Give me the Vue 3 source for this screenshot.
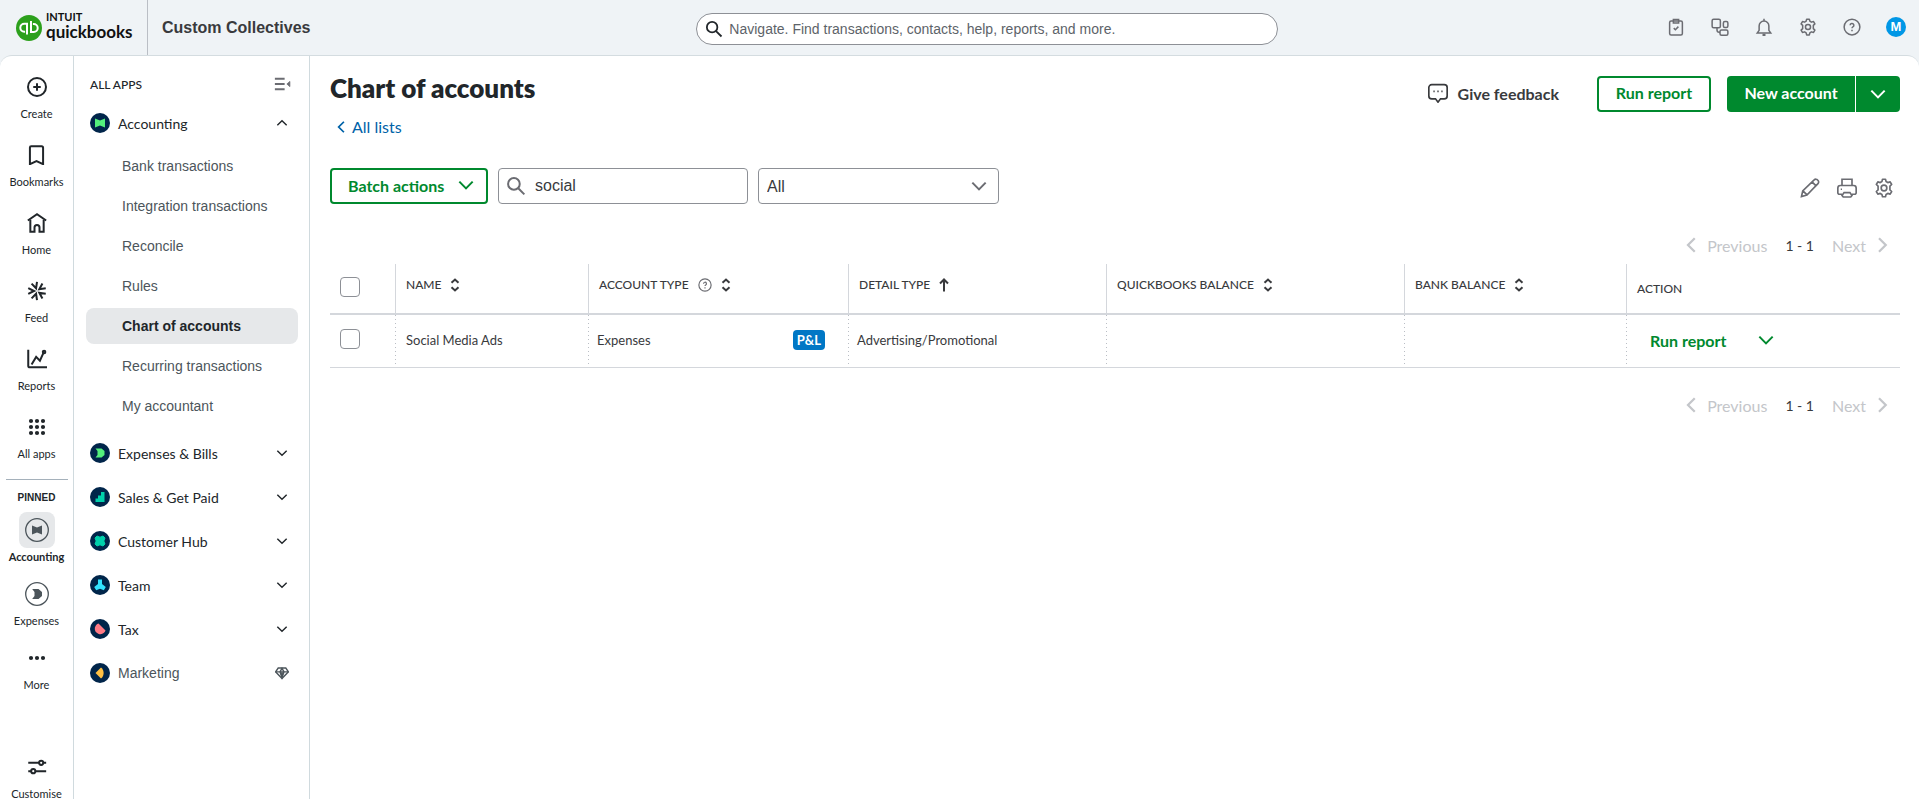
<template>
  <div class="app">
    <header class="topbar">
      <a href="#" class="brand" aria-label="Intuit QuickBooks">
        <svg class="brand-mark" viewBox="0 0 26 26" aria-hidden="true">
          <circle cx="13" cy="13" r="13" fill="#2ca01c" />
          <g fill="none" stroke="#fff" stroke-width="2">
            <path d="M11 19.5V8.7H8.3a4 4 0 0 0 0 8h.8" />
            <path d="M15 6v11h2.7a4 4 0 0 0 0-8h-.8" />
          </g>
        </svg>
        <span class="brand-name">
          <span class="brand-intuit">INTUIT</span>
          <span class="brand-product">quickbooks</span>
        </span>
      </a>
      <strong class="company">Custom Collectives</strong>
      <label class="global-search">
        <svg class="icon" viewBox="0 0 24 24" v-html="icons.search"></svg>
        <input
          type="text"
          aria-label="Search"
          placeholder="Navigate. Find transactions, contacts, help, reports, and more."
        />
      </label>
      <div class="top-actions">
        <button v-for="name in topIcons" :key="name" type="button" :aria-label="name">
          <svg class="icon" viewBox="0 0 24 24" v-html="icons[name]"></svg>
        </button>
        <button type="button" class="avatar">M</button>
      </div>
    </header>

    <div class="shell">
      <nav class="rail" aria-label="Main">
        <a v-for="item in railItems" :key="item.label" href="#" class="rail-item">
          <span class="rail-icon">
            <svg class="icon" viewBox="0 0 24 24" v-html="icons[item.icon]"></svg>
          </span>
          {{ item.label }}
        </a>
        <hr class="rail-line" />
        <div class="rail-heading">PINNED</div>
        <a
          v-for="item in pinnedItems"
          :key="item.label"
          href="#"
          class="rail-item pinned"
          :class="{ active: item.active, round: item.round, last: item.icon === 'sliders' }"
        >
          <span class="rail-icon">
            <svg class="icon" viewBox="0 0 24 24" v-html="icons[item.icon]"></svg>
          </span>
          {{ item.label }}
        </a>
      </nav>

      <aside class="side">
        <div class="side-head">
          <span>ALL APPS</span>
          <button type="button" aria-label="Collapse menu">
            <svg class="icon" viewBox="0 0 24 24" v-html="icons.collapse"></svg>
          </button>
        </div>
        <button type="button" class="app-row first" aria-expanded="true">
          <svg class="app-badge" viewBox="0 0 20 20" v-html="badges.accounting"></svg>
          <span>Accounting</span>
          <svg class="icon" viewBox="0 0 24 24" v-html="icons.up"></svg>
        </button>
        <a
          v-for="link in accountingLinks"
          :key="link"
          href="#"
          class="sub-link"
          :class="{ active: link === 'Chart of accounts' }"
          >{{ link }}</a
        >
        <div class="app-list">
          <button
            v-for="app in apps"
            :key="app.label"
            type="button"
            class="app-row"
            :class="{ locked: app.locked }"
          >
            <svg class="app-badge" viewBox="0 0 20 20" v-html="badges[app.badge]"></svg>
            <span>{{ app.label }}</span>
            <svg
              class="icon"
              viewBox="0 0 24 24"
              v-html="app.locked ? icons.diamond : icons.down"
            ></svg>
          </button>
        </div>
      </aside>

      <main class="content">
        <div class="page-head">
          <div>
            <h1>Chart of accounts</h1>
            <a href="#" class="back-link">
              <svg class="icon" viewBox="0 0 24 24" v-html="icons.left"></svg>All lists
            </a>
          </div>
          <div class="page-actions">
            <button type="button" class="feedback">
              <svg class="icon" viewBox="0 0 24 24" v-html="icons.feedback"></svg>Give feedback
            </button>
            <button type="button" class="btn-outline">Run report</button>
            <div class="btn-split">
              <button type="button">New account</button>
              <button type="button" class="split-arrow" aria-label="More options">
                <svg class="icon" viewBox="0 0 24 24" v-html="icons.down"></svg>
              </button>
            </div>
          </div>
        </div>

        <div class="toolbar">
          <button type="button" class="btn-outline batch">
            Batch actions
            <svg class="icon" viewBox="0 0 24 24" v-html="icons.down"></svg>
          </button>
          <label class="filter-search">
            <svg class="icon" viewBox="0 0 24 24" v-html="icons.search"></svg>
            <input v-model="query" type="text" aria-label="Filter by name" />
          </label>
          <div class="filter-select">
            <select v-model="filter" aria-label="Account type">
              <option>All</option>
            </select>
            <svg class="icon" viewBox="0 0 24 24" v-html="icons.down"></svg>
          </div>
          <div class="table-tools">
            <button v-for="name in tableIcons" :key="name" type="button" :aria-label="name">
              <svg class="icon" viewBox="0 0 24 24" v-html="icons[name]"></svg>
            </button>
          </div>
        </div>

        <div class="pager">
          <button type="button" disabled>
            <svg class="icon" viewBox="0 0 24 24" v-html="icons.left"></svg>Previous
          </button>
          <span>1 - 1</span>
          <button type="button" disabled>
            Next<svg class="icon" viewBox="0 0 24 24" v-html="icons.right"></svg>
          </button>
        </div>

        <table class="accounts">
          <thead>
            <tr>
              <th class="col-check"><input type="checkbox" aria-label="Select all" /></th>
              <th v-for="col in columns" :key="col.label" :class="col.cls">
                <span class="th-label">
                  {{ col.label }}
                  <svg v-if="col.help" class="icon help" viewBox="0 0 24 24" v-html="icons.help"></svg>
                  <svg v-if="col.sort" class="sort" viewBox="0 0 10 14" v-html="icons[col.sort]"></svg>
                </span>
              </th>
            </tr>
          </thead>
          <tbody>
            <tr v-for="row in rows" :key="row.name">
              <td class="col-check"><input type="checkbox" :aria-label="row.name" /></td>
              <td class="col-name">{{ row.name }}</td>
              <td>
                <span class="type-cell">{{ row.type }} <b>{{ row.tag }}</b></span>
              </td>
              <td>{{ row.detail }}</td>
              <td></td>
              <td></td>
              <td>
                <span class="row-action">
                  <button type="button">Run report</button>
                  <button type="button" aria-label="More actions">
                    <svg class="icon" viewBox="0 0 24 24" v-html="icons.down"></svg>
                  </button>
                </span>
              </td>
            </tr>
          </tbody>
        </table>

        <div class="pager bottom">
          <button type="button" disabled>
            <svg class="icon" viewBox="0 0 24 24" v-html="icons.left"></svg>Previous
          </button>
          <span>1 - 1</span>
          <button type="button" disabled>
            Next<svg class="icon" viewBox="0 0 24 24" v-html="icons.right"></svg>
          </button>
        </div>
      </main>
    </div>
  </div>
</template>

<script setup>
import { ref } from 'vue'

const query = ref('social')
const filter = ref('All')

const gear =
  '<path d="M10.2 1.5h3.6l.7 2.8 2 1.2 2.9-.8 1.8 3.1-2.1 2v4.4l2.1 2-1.8 3.1-2.9-.8-2 1.2-.7 2.8h-3.6l-.7-2.8-2-1.2-2.9.8-1.8-3.1 2.1-2V9.800l-2.100-2 1.800-3.100 2.900.8 2-1.200z" stroke-linejoin="round"/><circle cx="12" cy="12" r="3.4"/>'

const icons = {
  search: '<circle cx="9.5" cy="9.5" r="7"/><path d="m14.7 14.7 7.3 7.3"/>',
  tasks:
    '<rect x="3.5" y="4" width="17" height="18.5" rx="2"/><path d="M8.5 2h7v4.5h-7zM9 13.5l2.2 2.2 4-4.2"/>',
  apps: '<rect x="1.5" y="1.5" width="11" height="11.5" rx="2"/><rect x="16.5" y="4.5" width="6" height="8" rx="2"/><rect x="12" y="16" width="10.5" height="7" rx="2"/><path d="M8 13v3a3 3 0 0 0 3 3h1"/>',
  bell: '<path d="M3 20h18l-2.500-3.500V10.500a6.500 6.500 0 0 0-13 0v6zM12 1v3"/><path d="M10 22.500h4" stroke-width="3"/>',
  settings: gear,
  help: '<circle cx="12" cy="12" r="10.5"/><path d="M9.500 9.700a2.500 2.500 0 1 1 3.700 2.200c-.8.5-1.200.9-1.200 1.800"/><path d="M12 15.800v2"/>',
  plus: '<circle cx="12" cy="12" r="10.8"/><path d="M12 7.500v9M7.500 12h9"/>',
  bookmark:
    '<path d="M5 1.500h12.500a1.800 1.800 0 0 1 1.800 1.800V23l-7.900-3.700L3.500 23V3A1.500 1.500 0 0 1 5 1.500z"/>',
  home: '<path d="m1 9 11-7.500L23 9"/><path d="M4 8v14.500h5v-5a3 3 0 0 1 6 0v5h5V8"/>',
  feed: '<path d="M12 1 10.900 8.700 5.500 3.100M18.500 3.100l-3.700 6.800 7.700-1.300M22.500 15.400l-7.700-1.300 3.700 6.800M12 23l-1.100-7.700-5.400 5.600M1.500 15.400l7-3.400-7-3.400"/>',
  reports:
    '<path d="M1.500 1v19a2 2 0 0 0 2 2H24M5.500 18.500l5.500-9 4.500 4.500 4.500-10"/><circle cx="20.500" cy="3.500" r="1.500"/>',
  grid: [4.8, 12, 19.2]
    .map((y) => [4.8, 12, 19.2].map((x) => `<circle cx="${x}" cy="${y}" r="1.3"/>`).join(''))
    .join(''),
  accounting:
    '<circle cx="12" cy="12" r="11.3" stroke-width="1.3"/><path d="M7 7.500 12 9.500l5-2v9l-5-2-5 2z" fill="currentColor" stroke="none"/>',
  expenses:
    '<circle cx="12" cy="12" r="11.3" stroke-width="1.3"/><path d="M7.200 7h6.300l3.500 3v4l-3.500 3H7.200l2.300-3v-4z" fill="currentColor" stroke="none"/>',
  more: '<circle cx="4.8" cy="12" r="1.3"/><circle cx="12" cy="12" r="1.3"/><circle cx="19.2" cy="12" r="1.3"/>',
  sliders:
    '<path d="M1.500 7h13M19.500 7H23M1.500 17H5M10 17h13"/><circle cx="17" cy="7" r="2.5"/><circle cx="7.5" cy="17" r="2.5"/>',
  collapse:
    '<path d="M2.500 5h13M2.500 12h13M2.500 19h13"/><path d="M22.500 8.500v7L18.500 12z" fill="currentColor" stroke-width="1"/>',
  up: '<path d="m4 16 8-8 8 8"/>',
  down: '<path d="m4 8 8 8 8-8"/>',
  left: '<path d="m17 3-9 9 9 9"/>',
  right: '<path d="m8 3 9 9-9 9"/>',
  diamond:
    '<path d="M5.500 3.500h13L23 10 12 21.500 1 10z"/><path d="M1 10h22M8.500 10 12 4l3.500 6M12 10v10M8.500 10l3.500 10 3.500-10"/>',
  feedback:
    '<path d="M4.500 2h15A3.500 3.500 0 0 1 23 5.500v10a3.500 3.500 0 0 1-3.500 3.500H15l-3 4-3-4H4.500A3.500 3.500 0 0 1 1 15.500v-10A3.500 3.500 0 0 1 4.500 2z"/><path d="M6.500 10H8M11.200 10h1.600M16 10h1.500"/>',
  edit: '<path d="m1.800 22.200 1.500-6.700L17 2.300a2.800 2.800 0 0 1 4.200.2 2.800 2.800 0 0 1 .4 4.200L8.300 20.500zM14.500 4.700l4.700 4.700M3.500 15.500l5 4.800"/>',
  print:
    '<path d="M6 9V1.500h12V9M6 19.500H3A1.800 1.800 0 0 1 1 17.700V12a3 3 0 0 1 3-3h16a3 3 0 0 1 3 3v5.700a1.800 1.800 0 0 1-2 1.800h-3M4.500 13.500H6"/><path d="M8.500 17.500h7L18 21l-1.500 1.800h-9L6 21z"/>',
  both: '<path d="M1.500 4.800 5 1.500l3.500 3.300M1.500 9.200 5 12.500l3.500-3.300"/>',
  asc: '<path d="M5 13.500V2M1 5.500l4-4 4 4"/>',
}

const disc = '<circle cx="10" cy="10" r="10" fill="#00254a"/>'
const badges = {
  accounting: disc + '<path d="M5 5.500 10 7.500l5-2v9l-5-2-5 2z" fill="#53f07c"/>',
  expenses: disc + '<path d="M5.500 5.500h6L14.500 8v4l-3 2.500h-6l2-2.500V8z" fill="#53f07c"/>',
  sales: disc + '<path d="M14.500 5v10h-9v-3.500H8V8.500h3V5z" fill="#00d0ab"/>',
  hub:
    disc +
    '<path d="M7 5l3 1.200L13 5l2 2-1.200 3L15 13l-2 2-3-1.200L7 15l-2-2 1.200-3L5 7z" fill="#00d0ab" stroke="#00d0ab" stroke-linejoin="round"/>',
  team:
    disc +
    '<path d="M8 4.500h4V9l3.800 3-2 3.300-3.800-1.600-3.800 1.600-2-3.300L8 9z" fill="#33e3ff"/>',
  tax: disc + '<path d="m8.500 4.500 7 7A5.500 5.500 0 1 1 8.500 4.500z" fill="#ff7a85"/>',
  marketing: disc + '<path d="m5.500 10 5.500-5.500c3.500 2.500 3.500 8.500 0 11z" fill="#ffc043"/>',
}

const topIcons = ['tasks', 'apps', 'bell', 'settings', 'help']
const tableIcons = ['edit', 'print', 'settings']

const railItems = [
  { label: 'Create', icon: 'plus' },
  { label: 'Bookmarks', icon: 'bookmark' },
  { label: 'Home', icon: 'home' },
  { label: 'Feed', icon: 'feed' },
  { label: 'Reports', icon: 'reports' },
  { label: 'All apps', icon: 'grid' },
]

const pinnedItems = [
  { label: 'Accounting', icon: 'accounting', round: true, active: true },
  { label: 'Expenses', icon: 'expenses', round: true },
  { label: 'More', icon: 'more' },
  { label: 'Customise', icon: 'sliders' },
]

const accountingLinks = [
  'Bank transactions',
  'Integration transactions',
  'Reconcile',
  'Rules',
  'Chart of accounts',
  'Recurring transactions',
  'My accountant',
]

const apps = [
  { label: 'Expenses & Bills', badge: 'expenses' },
  { label: 'Sales & Get Paid', badge: 'sales' },
  { label: 'Customer Hub', badge: 'hub' },
  { label: 'Team', badge: 'team' },
  { label: 'Tax', badge: 'tax' },
  { label: 'Marketing', badge: 'marketing', locked: true },
]

const columns = [
  { label: 'NAME', sort: 'both', cls: 'col-name' },
  { label: 'ACCOUNT TYPE', sort: 'both', help: true, cls: 'col-type' },
  { label: 'DETAIL TYPE', sort: 'asc', cls: 'col-detail' },
  { label: 'QUICKBOOKS BALANCE', sort: 'both', cls: 'col-balance' },
  { label: 'BANK BALANCE', sort: 'both', cls: 'col-bank' },
  { label: 'ACTION', cls: 'col-action' },
]

const rows = [
  { name: 'Social Media Ads', type: 'Expenses', tag: 'P&L', detail: 'Advertising/Promotional' },
]
</script>

<style>
body {
  margin: 0;
  overflow: hidden;
}
</style>

<style scoped>
.app {
  display: flex;
  flex-direction: column;
  height: 100vh;
  background: #eff3f6;
  color: #21262a;
  font-family: Lato, sans-serif;
  font-size: 14px;
}

.app * {
  box-sizing: border-box;
}

a {
  color: inherit;
  text-decoration: none;
}

button {
  padding: 0;
  border: 0;
  background: none;
  color: inherit;
  font: inherit;
  cursor: pointer;
}

input,
select {
  font-family: 'Liberation Sans', sans-serif;
}

.icon,
.sort {
  flex: none;
  width: 20px;
  height: 20px;
  fill: none;
  stroke: currentColor;
  stroke-width: 2.4;
}

/* top bar */
.topbar {
  display: grid;
  grid-template-columns: 25fr 582px 23fr;
  grid-template-areas: 'left search right';
  align-items: center;
  height: 55px;
  flex: none;
}

.brand {
  grid-area: left;
  z-index: 1;
  display: flex;
  align-items: center;
  gap: 4px;
  width: 148px;
  height: 55px;
  padding-left: 16px;
  border-right: 1px solid #babec5;
  color: #111;
}

.brand-mark {
  width: 26px;
  height: 26px;
}

.brand-name {
  display: flex;
  flex-direction: column;
  padding-bottom: 3px;
  font-weight: 700;
}

.brand-intuit {
  font-size: 11px;
  line-height: 12px;
}

.brand-product {
  font-size: 17px;
  line-height: 18px;
}

.company {
  grid-area: left;
  padding-left: 162px;
  font: 700 16px/20px 'Liberation Sans', sans-serif;
  color: #393a3d;
  justify-self: start;
}

.global-search {
  grid-area: search;
  display: flex;
  align-items: center;
  gap: 6px;
  height: 32px;
  margin-top: 3px;
  padding: 0 16px 0 8px;
  border: 1px solid #8d9096;
  border-radius: 16px;
  background: #fff;
}

.global-search .icon {
  width: 18px;
  height: 18px;
}

.global-search input {
  flex: 1;
  padding: 0;
  border: 0;
  outline: 0;
  font-size: 14px;
}

.global-search input::placeholder {
  color: #5d6369;
}

.top-actions {
  grid-area: right;
  justify-self: end;
  display: flex;
  gap: 24px;
  padding: 0 13px 1px 0;
  color: #6b6c72;
}

.top-actions button {
  display: grid;
  place-items: center;
  width: 20px;
  height: 20px;
}

.top-actions .icon {
  width: 18px;
  height: 18px;
  stroke-width: 2;
}

.top-actions .avatar {
  border-radius: 50%;
  background: #0097e6;
  color: #fff;
  font: 700 13px/20px 'Liberation Sans', sans-serif;
}

.shell {
  display: flex;
  flex: 1;
  min-height: 0;
  overflow: hidden;
  border-top: 1px solid #d4dce0;
  border-radius: 12px 12px 0 0;
  background: #fff;
}

/* icon rail */
.rail {
  flex: none;
  width: 74px;
  padding-top: 13px;
  border-right: 1px solid #d0dade;
  overflow: hidden;
}

.rail-item {
  display: flex;
  flex-direction: column;
  align-items: center;
  gap: 1px;
  margin-bottom: 15px;
  font-size: 11px;
  line-height: 16px;
}

.rail-icon {
  display: grid;
  place-items: center;
  width: 36px;
  height: 36px;
  border-radius: 8px;
}

.rail-line {
  height: 1px;
  margin: 17px 5px 10px 6px;
  border: 0;
  background: #a5b1bb;
}

.rail-heading {
  margin-bottom: 6px;
  text-align: center;
  font: 700 10px/16px 'Liberation Sans', sans-serif;
}

.rail-item.pinned {
  margin-bottom: 11px;
}

.rail-item.active {
  font-weight: 700;
}

.rail-item.active .rail-icon {
  background: #e6e8ea;
}

.rail-item.round .icon {
  width: 24px;
  height: 24px;
  color: #4c555b;
}

.rail-item.last {
  margin-top: 56px;
}

/* app menu */
.side {
  flex: none;
  width: 236px;
  padding: 16px 11px 0 12px;
  border-right: 1px solid #d0dade;
}

.side-head {
  display: flex;
  justify-content: space-between;
  align-items: center;
  height: 24px;
  padding: 0 7px 0 4px;
  font-weight: 500;
  font-size: 12px;
}

.side-head .icon {
  display: block;
  width: 18px;
  height: 18px;
  color: #6b6c72;
}

.app-row {
  display: flex;
  align-items: center;
  gap: 8px;
  width: 100%;
  height: 44px;
  padding: 0 8px 0 4px;
  text-align: left;
}

.app-row span {
  flex: 1;
}

.app-row.first {
  margin-top: 5px;
}

.app-row .icon {
  width: 16px;
  height: 16px;
  padding: 1px;
}

.app-badge {
  width: 20px;
  height: 20px;
}

.sub-link {
  display: block;
  height: 36px;
  margin-bottom: 4px;
  padding-left: 36px;
  border-radius: 8px;
  font: 14px/36px 'Liberation Sans', sans-serif;
  color: #4c555b;
}

.sub-link.active {
  background: #e6e8ea;
  color: #21262a;
  font-weight: 700;
}

.sub-link:first-of-type {
  margin-top: 3px;
}

.app-list {
  margin-top: 7px;
}

.app-row.locked {
  font-family: 'Liberation Sans', sans-serif;
  color: #4c555b;
}

/* page */
.content {
  flex: 1;
  min-width: 0;
  padding: 20px 19px 0 20px;
  color: #393a3d;
}

.page-head {
  display: flex;
  justify-content: space-between;
  align-items: flex-start;
}

h1 {
  margin: 0 0 15px;
  font-size: 26px;
  line-height: 24px;
  font-weight: 800;
  color: #21262a;
}

.back-link {
  display: inline-flex;
  align-items: center;
  gap: 4px;
  padding-left: 4px;
  color: #0062a8;
  font-size: 16px;
  line-height: 24px;
}

.back-link .icon {
  width: 14px;
  height: 14px;
  stroke-width: 3;
}

.page-actions {
  display: flex;
  align-items: center;
  gap: 16px;
  font-size: 16px;
  font-weight: 700;
}

.feedback {
  display: flex;
  align-items: center;
  gap: 10px;
  margin-right: 22px;
  padding-bottom: 2px;
}

.feedback .icon {
  stroke-width: 2;
}

.btn-outline {
  min-width: 114px;
  height: 36px;
  padding: 0 16px 3px;
  border: 2px solid #00892e;
  border-radius: 4px;
  color: #00892e;
  font-size: 16px;
  font-weight: 700;
}

.btn-split {
  display: flex;
  gap: 1px;
  height: 36px;
}

.btn-split button {
  min-width: 128px;
  padding: 0 16px 3px;
  border-radius: 4px 0 0 4px;
  background: #00892e;
  color: #fff;
}

.btn-split .split-arrow {
  display: grid;
  place-items: center;
  min-width: 44px;
  padding: 0;
  border-radius: 0 4px 4px 0;
}

.toolbar {
  display: flex;
  gap: 10px;
  margin-top: 29px;
}

.toolbar > * {
  height: 36px;
}

.batch {
  display: flex;
  align-items: center;
  justify-content: space-between;
  min-width: 158px;
  padding: 0 10px 2px 16px;
}

.filter-search {
  display: flex;
  align-items: center;
  gap: 9px;
  width: 250px;
  padding: 0 8px 0 7px;
  border: 1px solid #8d9096;
  border-radius: 4px;
}

.filter-search .icon {
  color: #6b6c72;
}

.filter-search input {
  min-width: 0;
  flex: 1;
  padding: 0;
  border: 0;
  outline: 0;
  color: #393a3d;
  font-size: 16px;
}

.filter-select {
  position: relative;
  width: 241px;
}

.filter-select select {
  width: 100%;
  height: 36px;
  padding: 0 8px;
  border: 1px solid #8d9096;
  border-radius: 4px;
  background: #fff;
  color: #393a3d;
  font-size: 16px;
  appearance: none;
}

.filter-select .icon {
  position: absolute;
  top: 8px;
  right: 10px;
  color: #6b6c72;
  pointer-events: none;
}

.table-tools {
  display: flex;
  gap: 17px;
  margin-left: auto;
  padding: 10px 6px 0 0;
  color: #6b6c72;
}

.table-tools button {
  height: 20px;
}

.table-tools .icon {
  stroke-width: 2;
}

.pager {
  display: flex;
  justify-content: flex-end;
  align-items: center;
  gap: 18px;
  height: 24px;
  margin-top: 29px;
  padding-right: 9px;
  font-size: 16px;
}

.pager span {
  font-size: 14px;
}

.pager button {
  display: flex;
  align-items: center;
  gap: 7px;
  color: #c4c6ca;
}

.pager .icon {
  width: 18px;
  height: 18px;
  stroke-width: 3;
}

.accounts {
  width: 100%;
  margin-top: 7px;
  border-collapse: separate;
  border-spacing: 0;
  table-layout: fixed;
  font-size: 13px;
}

.accounts th,
.accounts td {
  padding: 0 10px;
  text-align: left;
  vertical-align: middle;
}

.accounts th {
  height: 51px;
  padding-bottom: 7px;
  border-bottom: 2px solid #d4d7dc;
  font-weight: 500;
  font-size: 12px;
}

.accounts td {
  height: 53px;
  padding: 0 9px 2px;
  border-bottom: 1px solid #d4d7dc;
}

.accounts th + th {
  border-left: 1px solid #d4d7dc;
}

/* widely spaced one-pixel dots between body cells */
.accounts td + td {
  background: linear-gradient(#babec5 1px, transparent 1px) 0 0 / 1px 4px repeat-y;
}

.accounts th.col-check {
  width: 65px;
  padding-bottom: 4px;
}

.accounts td.col-check {
  padding: 0 10px 5px;
}

.accounts td.col-name {
  padding-left: 11px;
}

th.col-name {
  width: 193px;
}

th.col-type {
  width: 260px;
}

th.col-detail {
  width: 258px;
}

th.col-balance {
  width: 298px;
}

th.col-bank {
  width: 222px;
}

.accounts th.col-action {
  width: 274px;
  padding-bottom: 0;
}

.accounts input {
  display: block;
  width: 20px;
  height: 20px;
  margin: 0;
  border: 1px solid #8d9096;
  border-radius: 4px;
  background: #fff;
  appearance: none;
}

.th-label {
  display: flex;
  align-items: center;
  gap: 9px;
  line-height: 16px;
}

.th-label .help {
  width: 14px;
  height: 14px;
  stroke-width: 2;
  color: #6b6c72;
}

.sort {
  width: 10px;
  height: 14px;
  stroke-width: 2;
}

.type-cell {
  display: flex;
  align-items: center;
  justify-content: space-between;
  padding-right: 14px;
}

.type-cell b {
  padding: 0 4px;
  border-radius: 4px;
  background: #0077c5;
  color: #fff;
  line-height: 20px;
}

.row-action {
  display: flex;
  align-items: center;
  gap: 30px;
  padding-left: 15px;
  color: #00892e;
  font-size: 16px;
  font-weight: 700;
}

.row-action .icon {
  display: block;
}

.pager.bottom {
  margin-top: 25px;
}
</style>
